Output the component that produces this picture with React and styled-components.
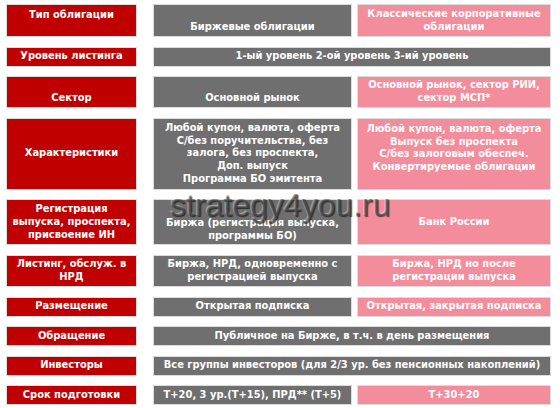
import React from "react";
import styled, { createGlobalStyle } from "styled-components";

const Global = createGlobalStyle`
  html, body { margin: 0; padding: 0; background: #ffffff; }
  body { width: 560px; height: 408px; overflow: hidden; }
`;

const Page = styled.div`
  position: relative;
  width: 560px;
  height: 408px;
  box-sizing: border-box;
  padding: 4px 9px 0 6px;
  font-family: "DejaVu Sans Condensed", "DejaVu Sans", Verdana, sans-serif;
  font-weight: bold;
  font-size: 11px;
  line-height: 12.8px;
  color: #ffffff;
`;

const Grid = styled.div`
  display: grid;
  grid-template-columns: 131px 398px;
  column-gap: 16px;
  grid-template-rows: 33px 20px 32px 72px 46px 32px 20px 20px 20px 20px;
  row-gap: 9.6px;
`;

const Pair = styled.div`
  display: grid;
  grid-template-columns: 199px 194px;
  column-gap: 5px;
`;

const palette = {
  red: "#c00000",
  gray: "#6f6f6f",
  pink: "#f48d9b",
};

const Cell = styled.div`
  box-sizing: border-box;
  background: ${(p) => palette[p.$tone]};
  border: 1px solid #dcdcdc;
  display: flex;
  flex-direction: column;
  justify-content: ${(p) =>
    p.$v === "top" ? "flex-start" : p.$v === "bottom" ? "flex-end" : "center"};
  align-items: center;
  text-align: center;
  padding: ${(p) => (p.$v === "top" ? "4px 3px" : p.$v === "bottom" ? "0 3px 2px" : "0 3px")};
  white-space: pre-line;
`;

const Watermark = styled.div`
  position: absolute;
  left: 170px;
  top: 187px;
  font-family: "Liberation Sans", Arial, sans-serif;
  font-weight: normal;
  font-size: 32px;
  line-height: 36px;
  color: rgba(80, 80, 80, 0.6);
  text-shadow: 1px 1px 1px rgba(0, 0, 0, 0.6), -1px -1px 0 rgba(255, 255, 255, 0.35);
  pointer-events: none;
`;

const rows = [
  {
    label: ["Тип облигации", "top"],
    mid: ["Биржевые облигации", "bottom"],
    right: ["Классические корпоративные\nоблигации", "center"],
  },
  { label: ["Уровень листинга", "center"], span: "1-ый уровень 2-ой уровень 3-ий уровень" },
  {
    label: ["Сектор", "bottom"],
    mid: ["Основной рынок", "bottom"],
    right: ["Основной рынок, сектор РИИ,\nсектор МСП*", "center"],
  },
  {
    label: ["Характеристики", "center"],
    mid: [
      "Любой купон, валюта, оферта\nС/без поручительства, без\nзалога, без проспекта,\nДоп. выпуск\nПрограмма БО эмитента",
      "center",
    ],
    right: [
      "Любой купон, валюта, оферта\nВыпуск без проспекта\nС/без залоговым обеспеч.\nКонвертируемые облигации",
      "top",
    ],
  },
  {
    label: ["Регистрация\nвыпуска, проспекта,\nприсвоение ИН", "center"],
    mid: ["Биржа (регистрация выпуска,\nпрограммы БО)", "bottom"],
    right: ["Банк России", "center"],
  },
  {
    label: ["Листинг, обслуж. в\nНРД", "center"],
    mid: ["Биржа, НРД, одновременно с\nрегистрацией выпуска", "center"],
    right: ["Биржа, НРД но после\nрегистрации выпуска", "center"],
  },
  {
    label: ["Размещение", "center"],
    mid: ["Открытая подписка", "center"],
    right: ["Открытая, закрытая подписка", "center"],
  },
  { label: ["Обращение", "center"], span: "Публичное на Бирже, в т.ч. в день размещения" },
  {
    label: ["Инвесторы", "center"],
    span: "Все группы инвесторов (для 2/3 ур. без пенсионных накоплений)",
  },
  {
    label: ["Срок подготовки", "center"],
    mid: ["Т+20, 3 ур.(Т+15), ПРД** (Т+5)", "center"],
    right: ["Т+30+20", "center"],
  },
];

export default function App() {
  return (
    <Page>
      <Global />
      <Grid>
        {rows.map((r, i) => (
          <React.Fragment key={i}>
            <Cell $tone="red" $v={r.label[1]}>
              {r.label[0]}
            </Cell>
            {r.span ? (
              <Cell $tone="gray" $v="center">
                {r.span}
              </Cell>
            ) : (
              <Pair>
                <Cell $tone="gray" $v={r.mid[1]}>
                  {r.mid[0]}
                </Cell>
                <Cell $tone="pink" $v={r.right[1]}>
                  {r.right[0]}
                </Cell>
              </Pair>
            )}
          </React.Fragment>
        ))}
      </Grid>
      <Watermark>strategy4you.ru</Watermark>
    </Page>
  );
}
